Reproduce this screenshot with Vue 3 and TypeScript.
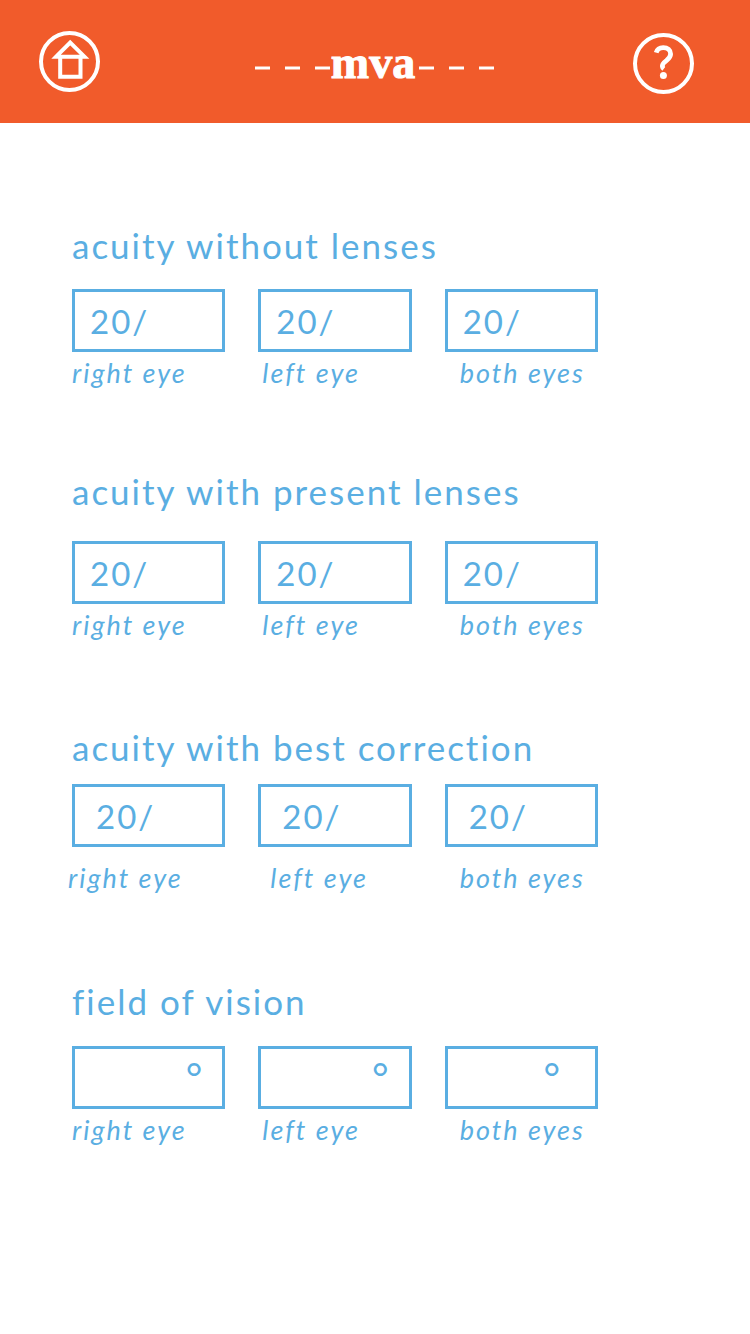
<script setup lang="ts">
import { reactive } from 'vue'

interface Field {
  id: string
  label: string
  value: string
}

interface Section {
  id: string
  title: string
  unit: string
  fields: Field[]
}

const eyes = [
  { key: 'right', label: 'right eye' },
  { key: 'left', label: 'left eye' },
  { key: 'both', label: 'both eyes' },
]

function makeSection(id: string, title: string, value: string, unit = ''): Section {
  return {
    id,
    title,
    unit,
    fields: eyes.map((eye) => ({ id: `${id}-${eye.key}`, label: eye.label, value })),
  }
}

const sections = reactive<Section[]>([
  makeSection('without', 'acuity without lenses', '20/'),
  makeSection('present', 'acuity with present lenses', '20/'),
  makeSection('best', 'acuity with best correction', '20/'),
  makeSection('vision', 'field of vision', '', '°'),
])
</script>

<template>
  <div class="page">
    <header class="bar">
      <button class="icon-button home" type="button" aria-label="Home">
        <svg viewBox="0 0 61 61" width="61" height="61" fill="none" stroke="#fff">
          <circle cx="30.5" cy="30.5" r="28.5" stroke-width="4" />
          <path d="M17.1 25.7 L31.2 11.5 L45.5 25.7 Z" stroke-width="4" />
          <path d="M21.2 25.7 V45.7 H41.5 V25.7" stroke-width="4" />
        </svg>
      </button>
      <h1 class="brand">
        <svg class="dashes" viewBox="0 0 76 12" width="76" height="12" aria-hidden="true">
          <path d="M0 2 H76" stroke="#fff" stroke-width="3" stroke-dasharray="15 15" />
        </svg>
        <span class="brand-name">mva</span>
        <svg class="dashes" viewBox="0 0 76 12" width="76" height="12" aria-hidden="true">
          <path d="M0 2 H76" stroke="#fff" stroke-width="3" stroke-dasharray="15 15" />
        </svg>
      </h1>
      <button class="icon-button help" type="button" aria-label="Help">
        <svg viewBox="0 0 61 61" width="61" height="61" fill="none" stroke="#fff">
          <circle cx="30.5" cy="30.5" r="28.5" stroke-width="4" />
          <path
            d="M23.2 19.6 C24.2 16.2 27 14.6 30.2 14.6 C34.6 14.6 37.6 17.2 37.6 21 C37.6 24 36 25.6 33.4 27.6 C30.4 29.8 29 31.4 29.4 33.6 C29.5 34.6 30 35.2 30.8 35.8"
            stroke-width="4.8"
          />
          <circle cx="30.4" cy="42.6" r="3.5" fill="#fff" stroke="none" />
        </svg>
      </button>
    </header>

    <main class="form">
      <section v-for="section in sections" :key="section.id" class="group" :class="section.id">
        <h2 class="title">{{ section.title }}</h2>
        <div class="fields">
          <div v-for="field in section.fields" :key="field.id" class="field">
            <div class="box">
              <input :id="field.id" v-model="field.value" class="entry" type="text" />
              <span v-if="section.unit" class="unit">{{ section.unit }}</span>
            </div>
            <label class="caption" :for="field.id">{{ field.label }}</label>
          </div>
        </div>
      </section>
    </main>
  </div>
</template>

<style>
body {
  margin: 0;
  background: #fff;
}
</style>

<style scoped>
.page {
  min-height: 100vh;
  background: #fff;
  color: #5aaee2;
  font-family: Lato, "Liberation Sans", sans-serif;
  letter-spacing: 2px;
}

.bar {
  display: grid;
  grid-template-columns: 1fr auto 1fr;
  padding: 31px 0 29px;
  background: #f15b2b;
}

.icon-button {
  padding: 0;
  border: 0;
  background: none;
  line-height: 0;
  cursor: pointer;
}

.home {
  justify-self: start;
  align-self: start;
  margin-left: 39px;
}

.help {
  justify-self: end;
  align-self: end;
  margin-right: 56px;
}

.brand {
  display: flex;
  align-items: baseline;
  margin: 0;
  color: #fff;
  font-family: "Liberation Serif", serif;
  font-size: 46px;
  font-weight: 700;
  line-height: 63px;
  letter-spacing: 0;
}

.brand-name {
  margin-right: 4px;
  -webkit-text-stroke: 1px #fff;
}

.form {
  padding: 102px 152px 60px 72px;
}

.group {
  --title-gap: 24px;
  --caption-gap: 5px;
  --inset: 15px;
  --right-indent: 0px;
  --left-indent: 4px;
  --both-indent: 15px;
  margin-bottom: 82px;
}

.group.present {
  --title-gap: 30px;
  margin-bottom: 86px;
}

.group.best {
  --title-gap: 17px;
  --caption-gap: 15px;
  --inset: 21px;
  --right-indent: -4px;
  --left-indent: 12px;
  margin-bottom: 87px;
}

.group.vision {
  --title-gap: 25px;
  margin-bottom: 0;
}

.title {
  margin: 0 0 var(--title-gap);
  font-size: 35px;
  font-weight: 400;
  line-height: 40px;
  white-space: nowrap;
}

.fields {
  display: grid;
  grid-template-columns: repeat(3, 1fr);
  gap: 33px;
}

.field {
  min-width: 0;
}

.box {
  display: flex;
  box-sizing: border-box;
  height: 63px;
  border: 3px solid #5aaee2;
}

.entry {
  flex: 1;
  min-width: 0;
  padding: 0 0 0 var(--inset);
  border: 0;
  outline: 0;
  background: none;
  color: inherit;
  font: inherit;
  font-size: 33px;
  letter-spacing: inherit;
}

.unit {
  padding-right: 18px;
  font-size: 40px;
  line-height: 57px;
}

.fields > .field:nth-child(3) .unit {
  padding-right: 33px;
}

.caption {
  display: block;
  margin-top: var(--caption-gap);
  margin-left: var(--right-indent);
  font-size: 27px;
  font-style: italic;
  line-height: 32px;
  white-space: nowrap;
}

.fields > .field:nth-child(2) .caption {
  margin-left: var(--left-indent);
}

.fields > .field:nth-child(3) .caption {
  margin-left: var(--both-indent);
}
</style>
